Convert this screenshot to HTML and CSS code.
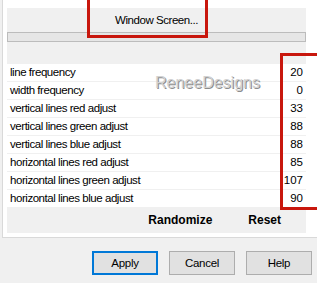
FILE: index.html
```html
<!DOCTYPE html>
<html lang="en">
<head>
    <meta charset="UTF-8">
    <meta name="viewport" content="width=device-width, initial-scale=1.0">
    <title>Window Screen</title>
    <link rel="stylesheet" href="styles.css">
</head>
<body>
    <div class="page">
        <div class="panel">
            <div class="panel-title">Window Screen...</div>
            <div class="preview-bar"></div>
            <div class="param-list">
                <div class="param-row"><span>line frequency</span><span class="val">20</span></div>
                <div class="param-row"><span>width frequency</span><span class="val">0</span></div>
                <div class="param-row"><span>vertical lines red adjust</span><span class="val">33</span></div>
                <div class="param-row"><span>vertical lines green adjust</span><span class="val">88</span></div>
                <div class="param-row"><span>vertical lines blue adjust</span><span class="val">88</span></div>
                <div class="param-row"><span>horizontal lines red adjust</span><span class="val">85</span></div>
                <div class="param-row"><span>horizontal lines green adjust</span><span class="val">107</span></div>
                <div class="param-row"><span>horizontal lines blue adjust</span><span class="val">90</span></div>
            </div>
            <div class="panel-actions">
                <span class="link-btn">Randomize</span>
                <span class="link-btn">Reset</span>
            </div>
        </div>
    </div>

    <div class="dialog-buttons">
        <button class="btn focused">Apply</button>
        <button class="btn">Cancel</button>
        <button class="btn">Help</button>
    </div>

    <!-- overlays: watermark and annotation boxes -->
    <div class="watermark">ReneeDesigns</div>
    <div class="mark mark-title"></div>
    <div class="mark mark-values"></div>
</body>
</html>
```

FILE: styles.css
```css
body {
    font-family: "Liberation Sans", Arial, sans-serif;
    font-size: 11.5px;
    letter-spacing: -0.45px;
    color: #000;
    margin: 0;
    width: 317px;
    height: 283px;
    overflow: hidden;
    position: relative;
    background-color: #f0f0f0;
}
.page {
    margin-left: 2px;
    width: 307px;
    background-color: #fff;
    border-left: 1px solid #d9d9d9;
    border-right: 1px solid #d9d9d9;
    border-bottom: 1px solid #d9d9d9;
    padding: 8px 4px 4px 4px;
}
.panel {
    background-color: #f0f0f0;
    width: 299px;
}
.panel-title {
    height: 24px;
    line-height: 24px;
    text-align: center;
}
.preview-bar {
    height: 8px;
    border: 1px solid #bcbcbc;
    background-color: #e6e6e6;
    margin-bottom: 22px;
}
.param-row {
    display: flex;
    justify-content: space-between;
    height: 17px;
    line-height: 17px;
    margin-bottom: 1px;
    padding: 0 3px 0 3px;
    background-color: #fff;
}
.val {
    letter-spacing: 0;
}
.panel-actions {
    display: flex;
    justify-content: flex-end;
    gap: 36px;
    height: 25px;
    line-height: 25px;
    padding-right: 25px;
}
.link-btn {
    font-weight: bold;
    font-size: 12px;
    letter-spacing: 0;
}
.dialog-buttons {
    display: flex;
    justify-content: flex-end;
    gap: 11px;
    padding: 13px 5px 0 0;
}
.btn {
    width: 66px;
    height: 24px;
    font-family: inherit;
    font-size: 11.5px;
    letter-spacing: -0.3px;
    background-color: #e1e1e1;
    border: 1px solid #adadad;
    padding: 0;
    color: #000;
}
.btn.focused {
    border: 2px solid #0078d7;
}
.watermark {
    position: absolute;
    left: 155px;
    top: 74px;
    font-size: 16px;
    letter-spacing: 0;
    color: #d2d2d2;
    text-shadow: 1px 1px 0 #8c8c8c;
}
.mark {
    position: absolute;
    border: 3px solid #c8170d;
}
.mark-title {
    left: 87px;
    top: -4px;
    width: 115px;
    height: 36px;
}
.mark-values {
    left: 280px;
    top: 53px;
    width: 40px;
    height: 151px;
}
```
